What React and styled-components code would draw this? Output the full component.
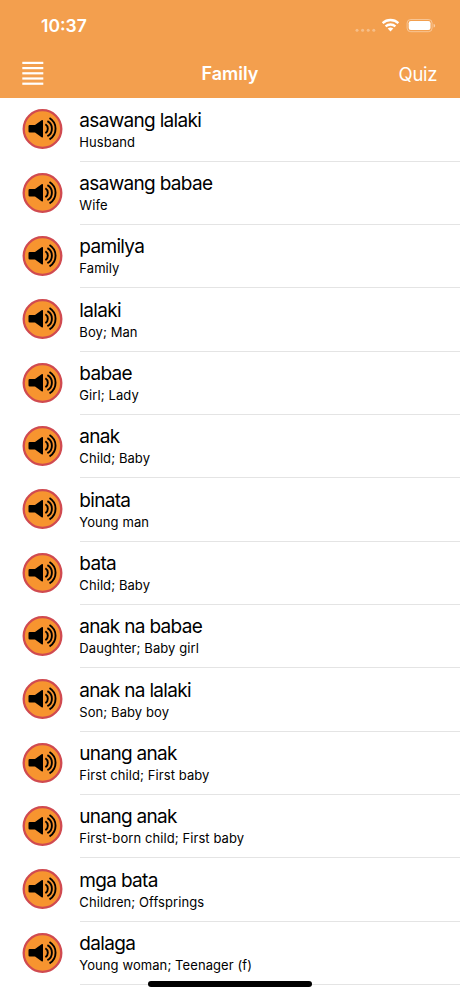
import React from "react";
import styled, { createGlobalStyle } from "styled-components";

const words = [
  { word: "asawang lalaki", meaning: "Husband" },
  { word: "asawang babae", meaning: "Wife" },
  { word: "pamilya", meaning: "Family" },
  { word: "lalaki", meaning: "Boy; Man" },
  { word: "babae", meaning: "Girl; Lady" },
  { word: "anak", meaning: "Child; Baby" },
  { word: "binata", meaning: "Young man" },
  { word: "bata", meaning: "Child; Baby" },
  { word: "anak na babae", meaning: "Daughter; Baby girl" },
  { word: "anak na lalaki", meaning: "Son; Baby boy" },
  { word: "unang anak", meaning: "First child; First baby" },
  { word: "unang anak", meaning: "First-born child; First baby" },
  { word: "mga bata", meaning: "Children; Offsprings" },
  { word: "dalaga", meaning: "Young woman; Teenager (f)" },
];

function StatusIcons() {
  return (
    <svg width="82" height="16" viewBox="0 0 82 16" fill="#fff">
      <g opacity="0.33">
        <circle cx="2" cy="12.3" r="1.5" />
        <circle cx="7.6" cy="12.3" r="1.5" />
        <circle cx="13.2" cy="12.3" r="1.5" />
        <circle cx="18.8" cy="12.3" r="1.5" />
      </g>
      <g transform="translate(-0.7 0)">
        <g fill="none" stroke="#fff" strokeWidth="2.3">
          <path d="M28.3 5.1a11.6 11.6 0 0 1 15.8 0" />
          <path d="M31.3 8.4a7.2 7.2 0 0 1 9.8 0" />
        </g>
        <path d="M33.4 10.6a4.4 4.4 0 0 1 5.6 0L36.2 13.6z" />
      </g>
      <rect x="52.1" y="1.5" width="25" height="12.2" rx="3.6" fill="none" stroke="#fff" opacity="0.4" />
      <rect x="53.7" y="3.1" width="21.8" height="9" rx="2.1" />
      <path d="M78.6 5.8v3.8q1.5-.6 1.5-1.9t-1.5-1.9z" opacity="0.5" />
    </svg>
  );
}

function SpeakerIcon() {
  return (
    <svg width="41" height="40" viewBox="-0.5 0 41 40">
      <circle cx="20" cy="20" r="18.8" fill="#f7942f" stroke="#d04a50" strokeWidth="2.3" />
      <path
        d="M7.2 16h5.3l6.6-4.7q1.4-.9 1.4.6v15.7q0 1.5-1.4.6l-6.6-4.7H7.2q-1.2 0-1.2-1.2v-5.1q0-1.2 1.2-1.2z"
        fill="#000"
      />
      <g fill="none" stroke="#000" strokeWidth="1.9">
        <path d="M22.9 15.3a5.2 5.2 0 0 1 0 8.8" />
        <path d="M24.9 12.2a8.5 8.5 0 0 1 0 15" />
        <path d="M27 9a12.5 12.5 0 0 1 0 21.4" />
      </g>
    </svg>
  );
}

function App() {
  return (
    <Screen>
      <GlobalStyle />
      <Header>
        <StatusBar>
          <Time>10:37</Time>
          <StatusIcons />
        </StatusBar>
        <NavBar>
          <MenuButton aria-label="Menu">
            <svg width="22" height="25" viewBox="0 0 22 25" fill="#fff">
              {[0.8, 6, 11.2, 16.4, 21.6].map((y) => (
                <rect key={y} x="0.3" y={y} width="21" height="2.2" />
              ))}
            </svg>
          </MenuButton>
          <Title>Family</Title>
          <QuizButton>Quiz</QuizButton>
        </NavBar>
      </Header>
      <List>
        {words.map((item, index) => (
          <Row key={index}>
            <PlayButton aria-label="Play">
              <SpeakerIcon />
            </PlayButton>
            <Entry>
              <Word>{item.word}</Word>
              <Meaning>{item.meaning}</Meaning>
            </Entry>
          </Row>
        ))}
      </List>
      <HomeIndicator />
    </Screen>
  );
}

export default App;

const GlobalStyle = createGlobalStyle`
  * {
    box-sizing: border-box;
  }
  body {
    margin: 0;
    background: #fff;
    font-family: Inter, "Liberation Sans", sans-serif;
  }
  button {
    padding: 0;
    border: 0;
    background: none;
    font: inherit;
    cursor: pointer;
  }
`;

const Screen = styled.div`
  position: relative;
  height: 996px;
  overflow: hidden;
  background: #fff;
`;

const Header = styled.header`
  height: 98.3px;
  background: #f39f4e;
  color: #fff;
`;

const StatusBar = styled.div`
  display: flex;
  justify-content: space-between;
  align-items: center;
  height: 50px;
  padding: 1px 23px 0 41px;
`;

const Time = styled.span`
  font-size: 17.5px;
  font-weight: 600;
`;

const NavBar = styled.div`
  display: grid;
  grid-template-columns: 1fr auto 1fr;
  align-items: center;
  height: 47px;
  padding: 0 22px;
`;

const MenuButton = styled.button`
  display: flex;
  justify-self: start;
`;

const Title = styled.h1`
  margin: 0;
  font-size: 18px;
  font-weight: 600;
`;

const QuizButton = styled.button`
  justify-self: end;
  margin-right: 1px;
  color: #fff;
  font-size: 18.5px;
  letter-spacing: -0.35px;
`;

const List = styled.ul`
  margin: 0;
  padding: 0;
  list-style: none;
`;

const Row = styled.li`
  display: flex;
  align-items: stretch;
  height: 63.33px;
  padding-left: 22px;
`;

const PlayButton = styled.button`
  display: flex;
  align-items: center;
  width: 58px;
  padding-bottom: 1px;
`;

const Entry = styled.div`
  flex: 1;
  padding-top: 9.4px;
  border-bottom: 1px solid #e4e4e4;
`;

const Word = styled.div`
  margin-left: -0.7px;
  font-size: 19px;
  line-height: 25px;
  letter-spacing: -0.68px;
`;

const Meaning = styled.div`
  margin-top: 1px;
  margin-left: -0.7px;
  font-size: 13px;
  line-height: 16px;
  letter-spacing: 0.08px;
`;

const HomeIndicator = styled.div`
  position: absolute;
  left: 148px;
  bottom: 9px;
  width: 164px;
  height: 6px;
  border-radius: 3px;
  background: #000;
`;
